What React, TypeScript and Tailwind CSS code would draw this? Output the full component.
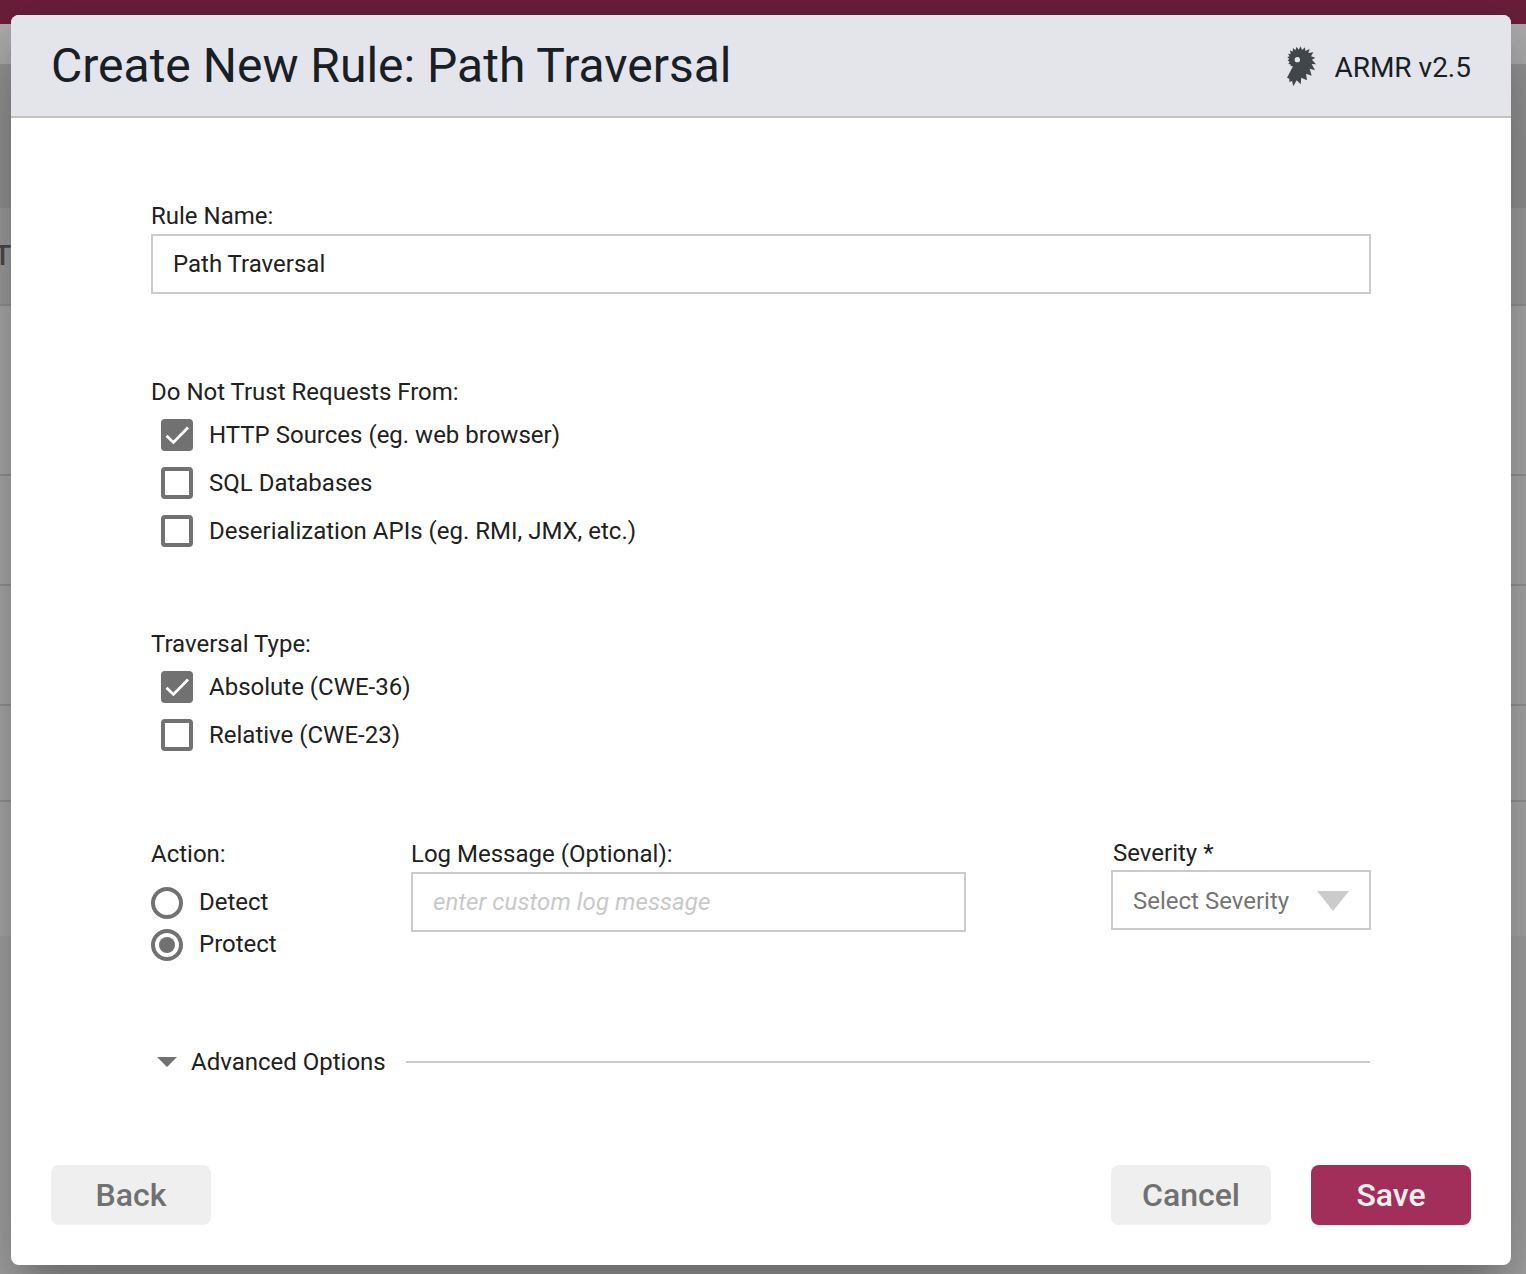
import type { ReactNode } from "react";

function Logo() {
  return (
    <svg viewBox="51 47 90 123" className="-mr-px mt-[2px] h-[41px] w-[30px]" fill="#41464a">
      <path
        fillRule="evenodd"
        d="M51 142 L60 125 L69 108 L61 107 L63 103 L55 100 L59 95 L53 90 L58 86 L52 80 L59 78 L54 70 L62 71 L60 60 L68 64 L69 53 L76 60 L80 49 L86 58 L92 48 L96 59 L105 51 L106 62 L119 56 L115 68 L130 66 L123 78 L136 82 L126 88 L138 102 L125 101 L135 120 L119 115 L125 136 L108 130 L111 150 L94 142 L92 162 L80 150 L70 168 L66 152 L58 155 L58 145 Z M82 80 A8 8 0 1 0 82 96 A8 8 0 1 0 82 80 Z"
      />
    </svg>
  );
}

function Checkbox({ checked = false, children }: { checked?: boolean; children: ReactNode }) {
  return (
    <label className="flex h-12 items-center gap-4 pl-[10px]">
      {checked ? (
        <span className="flex size-8 items-center justify-center rounded-[4px] bg-[#717171]">
          <svg viewBox="0 0 32 32" className="size-8" fill="none" stroke="#fff" strokeWidth="2.8">
            <path d="M5.5 16.8 L12.4 23.4 L27 8.4" />
          </svg>
        </span>
      ) : (
        <span className="size-8 rounded-[4px] border-4 border-[#717171]" />
      )}
      <span>{children}</span>
    </label>
  );
}

function Radio({ checked = false, children }: { checked?: boolean; children: ReactNode }) {
  return (
    <label className="flex h-[42px] items-center gap-4">
      <span className="flex size-8 items-center justify-center rounded-full border-4 border-[#717171]">
        {checked && <span className="size-4 rounded-full bg-[#717171]" />}
      </span>
      <span className="-mt-[2px]">{children}</span>
    </label>
  );
}

// Page dimmed behind the dialog
function Backdrop() {
  return (
    <div className="flex h-full flex-col bg-[#a5a5a5]">
      <div className="h-6 bg-[#6b1f3a]" />
      <div className="h-10 bg-[#adadad]" />
      <div className="h-36 bg-[#959596]" />
      <div className="flex h-[98px] items-center border-b-2 border-[#949494] bg-[#a0a0a1]">
        <span className="-ml-[6px] text-[28px] font-medium text-[#4b4c50]">T</span>
      </div>
      <div className="h-[170px] border-b-2 border-[#969696] bg-[#adadad]" />
      <div className="h-[110px] border-b-2 border-[#969696] bg-[#adadad]" />
      <div className="h-[120px] border-b-2 border-[#969696] bg-[#adadad]" />
      <div className="h-24 border-b-2 border-[#969696] bg-[#adadad]" />
      <div className="h-[134px] bg-[#adadad]" />
    </div>
  );
}

export default function App() {
  return (
    <div className="relative h-[1274px] w-[1526px] overflow-hidden font-['Roboto',sans-serif] text-2xl text-[#212121]">
      <Backdrop />

      <div className="absolute top-[15px] left-[11px] flex h-[1250px] w-[1500px] flex-col rounded-[8px] bg-white shadow-[0_22px_30px_-14px_rgba(0,0,0,0.2),0_48px_76px_6px_rgba(0,0,0,0.14),0_18px_92px_16px_rgba(0,0,0,0.12)]">
        <header className="flex h-[103px] items-center justify-between rounded-t-[8px] border-b-2 border-[#c1c1c3] bg-[#e4e5ea] px-10 text-[#182026]">
          <h1 className="text-[48px] leading-[56px]">Create New Rule: Path Traversal</h1>
          <div className="flex items-center gap-[18px]">
            <Logo />
            <span className="pt-[5px] text-[28px] leading-8">ARMR v2.5</span>
          </div>
        </header>

        <main className="flex flex-1 flex-col px-[140px] pt-[82px]">
          <div className="flex flex-col gap-[2px]">
            <label>Rule Name:</label>
            <input
              className="h-[60px] border-2 border-[#cbcbcb] px-5 outline-none"
              defaultValue="Path Traversal"
            />
          </div>

          <div className="mt-[82px]">
            <p className="mb-[3px]">Do Not Trust Requests From:</p>
            <Checkbox checked>HTTP Sources (eg. web browser)</Checkbox>
            <Checkbox>SQL Databases</Checkbox>
            <Checkbox>Deserialization APIs (eg. RMI, JMX, etc.)</Checkbox>
          </div>

          <div className="mt-[73px]">
            <p className="mb-[3px]">Traversal Type:</p>
            <Checkbox checked>Absolute (CWE-36)</Checkbox>
            <Checkbox>Relative (CWE-23)</Checkbox>
          </div>

          <div className="mt-[78px] flex">
            <div className="w-[260px] pt-px">
              <p className="mb-3">Action:</p>
              <Radio>Detect</Radio>
              <Radio checked>Protect</Radio>
            </div>
            <div className="flex w-[555px] flex-col gap-[2px] pt-px">
              <label>Log Message (Optional):</label>
              <input
                className="h-[60px] border-2 border-[#cbcbcb] px-5 outline-none placeholder:tracking-[0.07px] placeholder:text-[#c8c8c8] placeholder:italic"
                placeholder="enter custom log message"
              />
            </div>
            <div className="ml-auto flex w-[260px] flex-col gap-px">
              <label className="pl-[2px]">Severity *</label>
              <div className="flex h-[60px] items-center justify-between border-2 border-[#cbcbcb] px-5 pt-[2px] text-[#757575]">
                Select Severity
                <svg viewBox="0 0 32 20" className="h-5 w-8" fill="#cbcbcb">
                  <path d="M0 0 H32 L16 20 Z" />
                </svg>
              </div>
            </div>
          </div>

          <div className="mt-20 flex items-center">
            <svg viewBox="0 0 20 10" className="ml-[6px] h-[10px] w-5" fill="#717171">
              <path d="M0 0 H20 L10 10 Z" />
            </svg>
            <span className="ml-[14px] w-[215px]">Advanced Options</span>
            <div className="mr-px h-[2px] flex-1 bg-[#cbcbcb]" />
          </div>
        </main>

        <footer className="flex gap-10 px-10 pb-10 text-[32px] font-medium">
          <button className="mr-auto h-[60px] w-40 rounded-[8px] bg-[#efefef] text-[#717171]">Back</button>
          <button className="h-[60px] w-40 rounded-[8px] bg-[#efefef] text-[#717171]">Cancel</button>
          <button className="h-[60px] w-40 rounded-[8px] bg-[#a12f59] text-[#efefef]">Save</button>
        </footer>
      </div>
    </div>
  );
}
